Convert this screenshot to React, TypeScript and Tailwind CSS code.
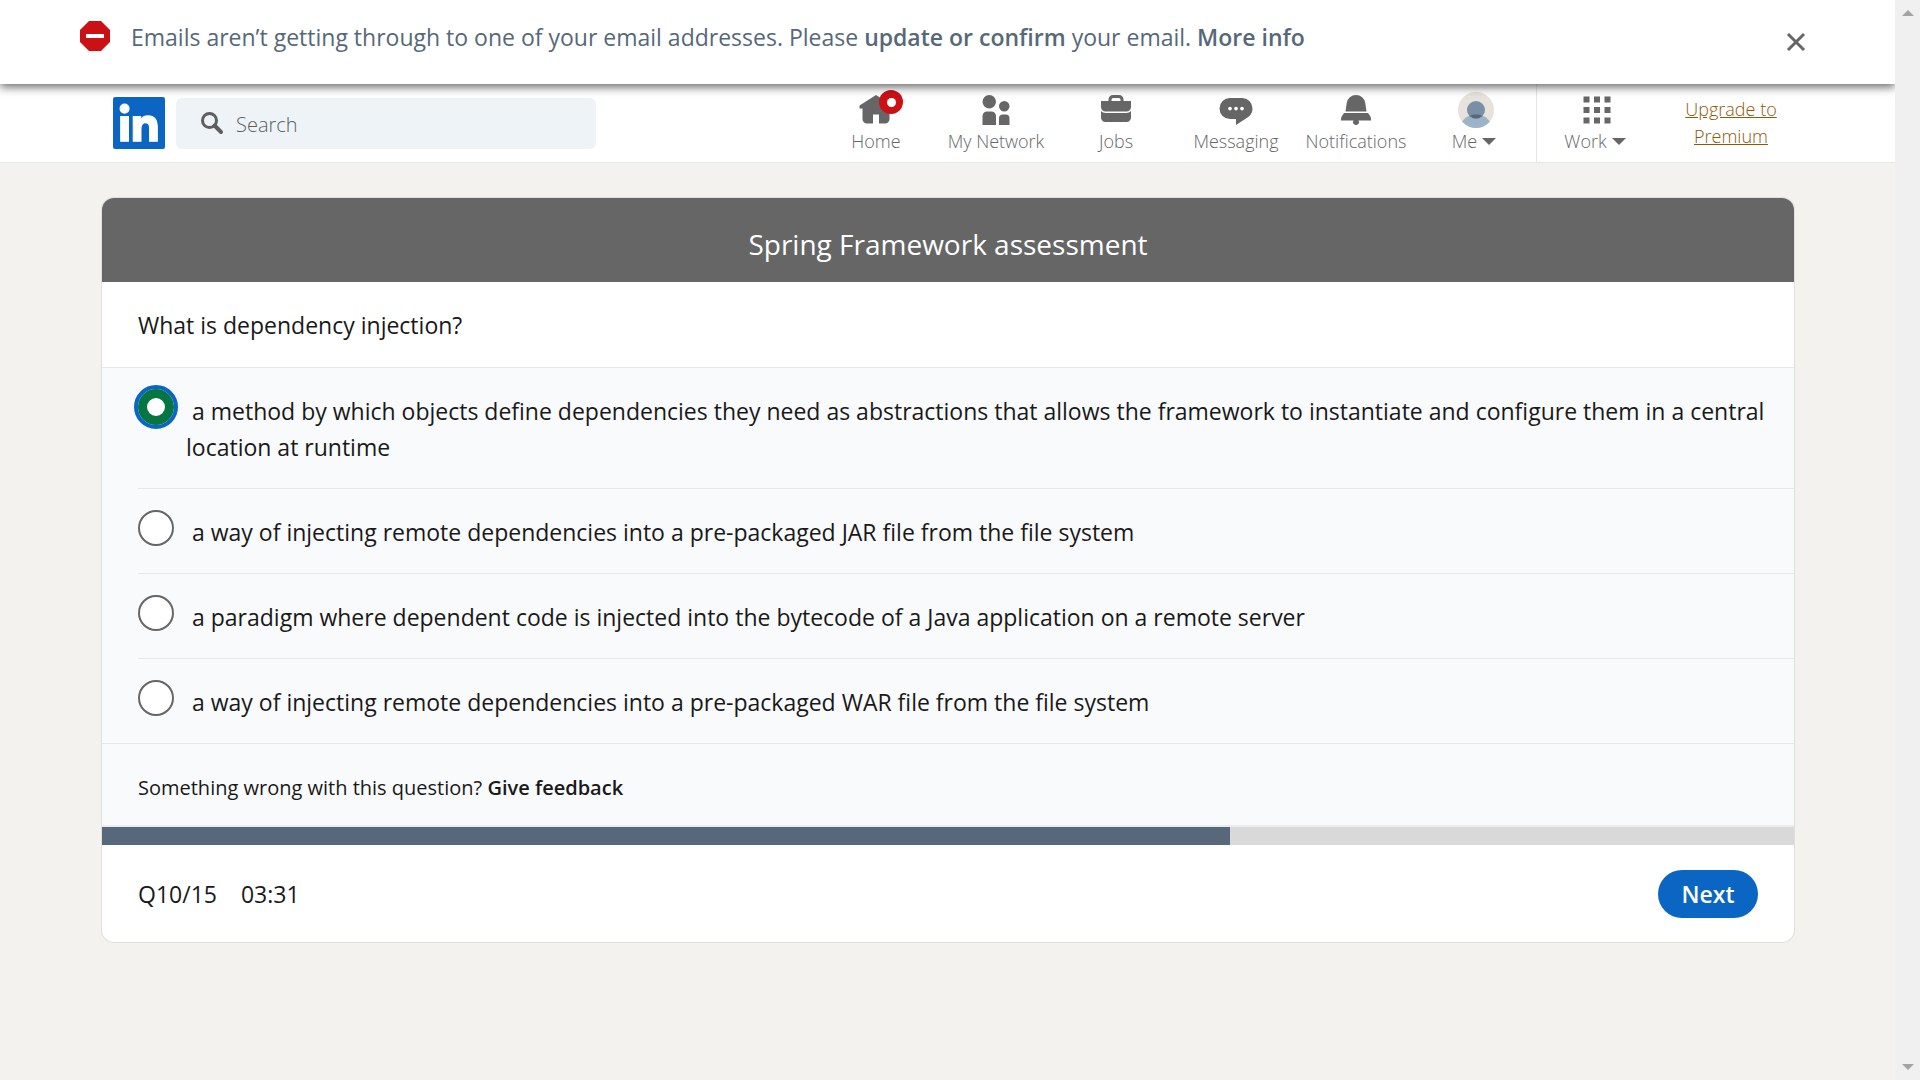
import { useState, type ReactNode } from "react";

const HOME = "M23 9v2h-2v7a3 3 0 01-3 3h-4v-6h-4v6H6a3 3 0 01-3-3v-7H1V9l11-7z";
const NETWORK =
  "M12 16v6H3v-6a3 3 0 013-3h3a3 3 0 013 3zm5.5-3A3.5 3.5 0 1014 9.5a3.5 3.5 0 003.5 3.5zm1 2h-2a2.5 2.5 0 00-2.5 2.5V22h7v-4.5a2.5 2.5 0 00-2.5-2.5zM7.5 2A4.5 4.5 0 1012 6.5 4.49 4.49 0 007.5 2z";
const JOBS =
  "M17 6V5a3 3 0 00-3-3h-4a3 3 0 00-3 3v1H2v4a3 3 0 003 3h14a3 3 0 003-3V6zM9 5a1 1 0 011-1h4a1 1 0 011 1v1H9zm10 9a4 4 0 003-1.38V17a3 3 0 01-3 3H5a3 3 0 01-3-3v-4.38A4 4 0 005 14z";
const MESSAGING =
  "M16 4H8a7 7 0 000 14h4v4l8.16-5.39A6.78 6.78 0 0023 11a7 7 0 00-7-7zm-8 8.25A1.25 1.25 0 119.25 11 1.25 1.25 0 018 12.25zm4 0A1.25 1.25 0 1113.25 11 1.25 1.25 0 0112 12.25zm4 0A1.25 1.25 0 1117.25 11 1.25 1.25 0 0116 12.25z";
const BELL =
  "M22 19h-8.28a2 2 0 11-3.44 0H2v-1a4.52 4.52 0 011.17-2.83l1-1.17h15.7l1 1.17A4.42 4.42 0 0122 18zM18.21 7.44A6.27 6.27 0 0012 2a6.27 6.27 0 00-6.21 5.44L5 13h14z";
const GRID =
  "M3 3h4v4H3zM10 3h4v4h-4zM17 3h4v4h-4zM3 10h4v4H3zM10 10h4v4h-4zM17 10h4v4h-4zM3 17h4v4H3zM10 17h4v4h-4zM17 17h4v4h-4z";

function Icon({ d }: { d: string }) {
  return (
    <svg viewBox="0 0 24 24" className="size-9 fill-[#666666]" aria-hidden="true">
      <path d={d} fillRule="evenodd" />
    </svg>
  );
}

function Caret() {
  return (
    <svg viewBox="0 0 14 7" className="h-[7px] w-3.5 fill-[#666666]" aria-hidden="true">
      <path d="M0 0h14L7 7z" />
    </svg>
  );
}

function NavLink({ label, d, badge }: { label: string; d: string; badge?: boolean }) {
  return (
    <a href="#" className="flex w-[120px] flex-col items-center pt-2">
      <span className="relative">
        <Icon d={d} />
        {badge && (
          <span className="absolute -top-[2px] -right-[9px] flex size-6 items-center justify-center rounded-full bg-[#cb1016]">
            <span className="size-[9px] rounded-full bg-white" />
          </span>
        )}
      </span>
      <span className="text-[18px] leading-[26px] font-light whitespace-nowrap">{label}</span>
    </a>
  );
}

function NavMenu({ label, children }: { label: string; children: ReactNode }) {
  return (
    <button type="button" className="flex w-[120px] flex-col items-center pt-2">
      {children}
      <span className="flex items-center gap-[5px] pr-1 text-[18px] leading-[26px] font-light">
        {label}
        <Caret />
      </span>
    </button>
  );
}

const OPTIONS = [
  "a method by which objects define dependencies they need as abstractions that allows the framework to instantiate and configure them in a central location at runtime",
  "a way of injecting remote dependencies into a pre-packaged JAR file from the file system",
  "a paradigm where dependent code is injected into the bytecode of a Java application on a remote server",
  "a way of injecting remote dependencies into a pre-packaged WAR file from the file system",
];

function Banner() {
  return (
    <div className="relative z-10 flex h-[84px] items-center bg-white pr-[89px] pl-20 shadow-[0_3px_9px_rgba(0,0,0,0.6)]">
      <svg viewBox="0 0 30 30" className="mb-3 size-[30px] shrink-0" aria-hidden="true">
        <path d="M9 0h12l9 9v12l-9 9H9l-9-9V9z" fill="#cb1016" />
        <path d="M6 13h18v4H6z" fill="#fff" />
      </svg>
      <p className="mb-2.5 ml-[21px] text-[23px] leading-9 text-[#56687a]">
        Emails aren’t getting through to one of your email addresses. Please{" "}
        <a href="#" className="font-semibold">update or confirm</a> your email.{" "}
        <a href="#" className="font-semibold">More info</a>
      </p>
      <button type="button" aria-label="Dismiss" className="ml-auto">
        <svg viewBox="0 0 20 20" className="size-5" fill="none" stroke="#666666" strokeWidth="3" aria-hidden="true">
          <path d="M2 2l16 16M18 2L2 18" />
        </svg>
      </button>
    </div>
  );
}

function Header() {
  return (
    <header className="flex h-[79px] border-b border-[#e6e6e4] bg-white pr-[113px] pl-[113px] text-[#666666]">
      <a href="#" aria-label="LinkedIn" className="pt-[13px]">
        <svg viewBox="0 0 24 24" className="size-[52px]" aria-hidden="true">
          <rect width="24" height="24" rx="1" fill="#0a66c2" />
          <path
            fill="#fff"
            stroke="#fff"
            strokeWidth="0.5"
            d="M20.447 20.452h-3.554v-5.569c0-1.328-.027-3.037-1.852-3.037-1.853 0-2.136 1.445-2.136 2.939v5.667H9.351V9h3.414v1.561h.046c.477-.9 1.637-1.85 3.37-1.85 3.601 0 4.267 2.37 4.267 5.455v6.286zM5.337 7.433a2.062 2.062 0 0 1-2.063-2.065 2.064 2.064 0 1 1 2.063 2.065zm1.782 13.019H3.555V9h3.564v11.452z"
          />
        </svg>
      </a>
      <label className="mt-3.5 ml-[11px] flex h-[51px] w-[420px] items-center rounded-md bg-[#eef3f8] pl-6">
        <svg viewBox="0 0 24 24" className="mb-0.5 size-6 shrink-0" fill="none" stroke="#5e5e5e" aria-hidden="true">
          <circle cx="9.5" cy="9.5" r="7" strokeWidth="3" />
          <path d="M14.5 14.5l6.5 6.5" strokeWidth="4" strokeLinecap="round" />
        </svg>
        <input
          type="text"
          aria-label="Search"
          placeholder="Search"
          className="ml-3 w-full min-w-0 bg-transparent pt-0.5 text-[20px] font-light outline-none placeholder:text-[#5e5e5e]"
        />
      </label>
      <nav className="ml-auto flex">
        <NavLink label="Home" d={HOME} badge />
        <NavLink label="My Network" d={NETWORK} />
        <NavLink label="Jobs" d={JOBS} />
        <NavLink label="Messaging" d={MESSAGING} />
        <NavLink label="Notifications" d={BELL} />
        <NavMenu label="Me">
          <svg viewBox="0 0 36 36" className="size-9" aria-hidden="true">
            <clipPath id="avatar">
              <circle cx="18" cy="18" r="18" />
            </clipPath>
            <g clipPath="url(#avatar)">
              <rect width="36" height="36" fill="#e7e2dc" />
              <circle cx="18" cy="40" r="17.5" fill="#9db3c8" />
              <circle cx="18" cy="18" r="9" fill="#788fa5" />
              <path d="M11.6 23.7a17.5 17.5 0 0 1 12.800 0a9 9 0 0 1-12.800 0z" fill="#56687a" />
            </g>
          </svg>
        </NavMenu>
        <div className="flex border-l border-[#e6e6e6]">
          <NavMenu label="Work">
            <Icon d={GRID} />
          </NavMenu>
        </div>
        <a href="#" className="ml-[23px] w-[102px] pt-3 text-center text-[18px] leading-[27px] font-light text-[#915907] underline">
          Upgrade to Premium
        </a>
      </nav>
    </header>
  );
}

function Assessment() {
  const [selected, setSelected] = useState(0);
  return (
    <section className="overflow-hidden rounded-xl bg-white shadow-[0_0_0_1px_#e0dfdc]">
      <h1 className="bg-[#666666] pt-[26px] pb-[18px] text-center text-[28px] leading-10 text-white">
        Spring Framework assessment
      </h1>
      <form className="text-[23px] leading-9 text-[#191919]">
        <fieldset>
          <legend className="w-full pt-[25px] pb-6 pl-9">What is dependency injection?</legend>
          <div className="border-y border-[#e6e8ea] bg-[#f9fafc] pl-9">
            {OPTIONS.map((text, i) => (
              <label
                key={text}
                className="flex gap-3 border-b border-[#e6e8ea] pt-[21px] pr-7 pb-[23px] last:border-b-0"
              >
                <input
                  type="radio"
                  name="answer"
                  checked={selected === i}
                  onChange={() => setSelected(i)}
                  className="size-9 shrink-0 appearance-none rounded-full border-2 border-[#666666] bg-white checked:border-[9px] checked:border-[#057642] checked:outline-4 checked:outline-[#0a66c2]"
                />
                <span className="pt-1 indent-1.5">{text}</span>
              </label>
            ))}
          </div>
        </fieldset>
        <p className="border-b-2 border-[#ececec] bg-[#f9fafc] pt-[26px] pb-[19px] pl-9 text-[20px]">
          Something wrong with this question?{" "}
          <button type="button" className="font-semibold">Give feedback</button>
        </p>
        <div
          role="progressbar"
          aria-label="Assessment progress"
          aria-valuenow={10}
          aria-valuemax={15}
          className="h-[18px] bg-[#d9d9d9]"
        >
          <div className="h-full w-2/3 bg-[#56687a]" />
        </div>
        <div className="flex items-center gap-6 pt-[25px] pr-9 pb-6 pl-9">
          <span>Q10/15</span>
          <span>03:31</span>
          <button
            type="button"
            className="ml-auto h-12 w-[100px] rounded-full bg-[#0a66c2] font-semibold text-white"
          >
            Next
          </button>
        </div>
      </form>
    </section>
  );
}

export default function App() {
  return (
    <div className="flex min-h-screen bg-[#f3f2ef] font-['Open_Sans','Noto_Sans',sans-serif]">
      <div className="min-w-0 flex-1 overflow-hidden">
        <Banner />
        <Header />
        <main className="pt-[35px] pr-[101px] pb-10 pl-[102px]">
          <Assessment />
        </main>
      </div>
      <div className="flex w-[25px] flex-col items-center justify-between bg-[#f0f0f0] py-2.5" aria-hidden="true">
        <svg viewBox="0 0 12 6" className="h-1.5 w-3 fill-[#a3a3a3]">
          <path d="M0 6h12L6 0z" />
        </svg>
        <svg viewBox="0 0 12 6" className="h-1.5 w-3 fill-[#a3a3a3]">
          <path d="M0 0h12L6 6z" />
        </svg>
      </div>
    </div>
  );
}
